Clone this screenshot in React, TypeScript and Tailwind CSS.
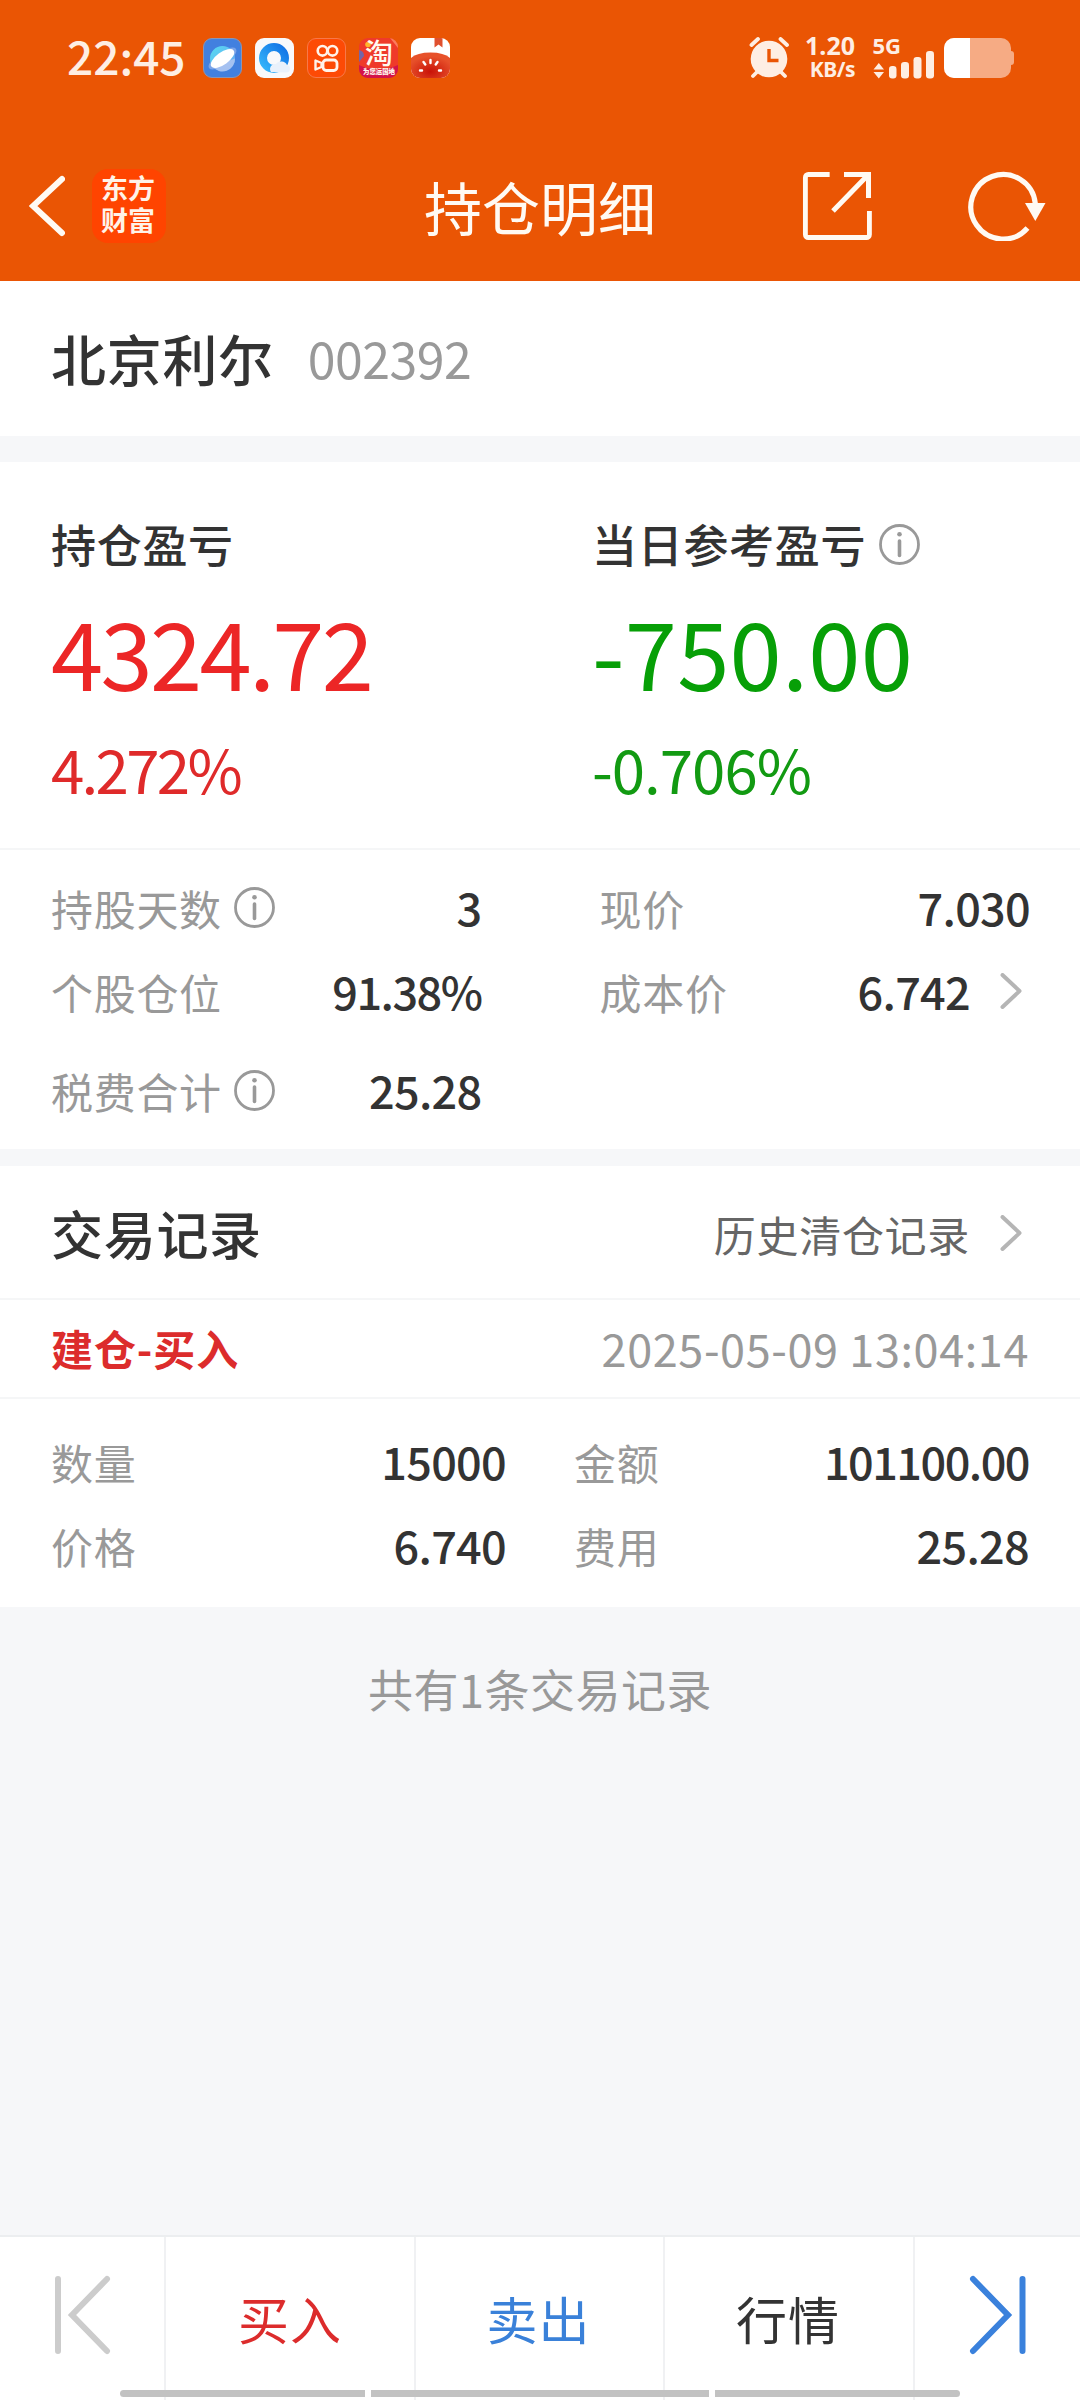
import type { ReactNode } from "react";
import clsx from "clsx";

interface FieldProps {
  label: string;
  value: string;
  info?: boolean;
  arrow?: boolean;
  tight?: boolean;
}

interface ProfitProps {
  title: ReactNode;
  amount: string;
  percent: string;
  amountClass: string;
  percentClass: string;
}

function InfoIcon() {
  return (
    <svg width="41" height="41" viewBox="0 0 41 41" fill="none" className="shrink-0">
      <circle cx="20.5" cy="20.5" r="19" stroke="#999" strokeWidth="2.8" />
      <circle cx="20.5" cy="10.3" r="2.3" fill="#999" />
      <path d="M20.5 17v14.5" stroke="#999" strokeWidth="3.6" strokeLinecap="round" />
    </svg>
  );
}

function ChevronIcon() {
  return (
    <svg width="22" height="36" viewBox="0 0 22 36" fill="none" className="shrink-0">
      <path d="M2.5 2l17 16-17 16" stroke="#b5b5b5" strokeWidth="4" strokeLinecap="round" strokeLinejoin="round" />
    </svg>
  );
}

function AppIcons() {
  return (
    <div className="flex gap-[13px]">
      {/* Planet browser */}
      <svg width="39" height="40" viewBox="0 0 39 40">
        <defs>
          <linearGradient id="planet" x1="0" y1="0" x2="1" y2="1">
            <stop offset="0" stopColor="#56dcf0" />
            <stop offset="1" stopColor="#6aa2f5" />
          </linearGradient>
        </defs>
        <rect x=".5" y=".5" width="38" height="39" rx="8.5" fill="#4280df" stroke="#8b95b4" />
        <ellipse cx="19.5" cy="20.5" rx="16.5" ry="6.5" transform="rotate(-36 19.5 20.5)" fill="#7ba4e8" />
        <circle cx="19.5" cy="20.5" r="12.5" fill="url(#planet)" />
        <path d="M9.5 28.5A12.5 12.5 0 0 0 32 20.5z" fill="#a5c1f1" />
        <ellipse cx="19.5" cy="20.5" rx="13.8" ry="6.3" transform="rotate(-36 19.5 20.5)" fill="#fff" />
      </svg>
      {/* Blue Q with cloud */}
      <svg width="39" height="40" viewBox="0 0 39 40">
        <defs>
          <linearGradient id="ring" x1="0" y1="1" x2="1" y2="0">
            <stop offset="0" stopColor="#35b5fa" />
            <stop offset="1" stopColor="#1173e6" />
          </linearGradient>
        </defs>
        <rect width="39" height="40" rx="9" fill="#f8f9fb" />
        <circle cx="19" cy="20" r="11" fill="none" stroke="url(#ring)" strokeWidth="8" />
        <path d="M16 34a5 5 0 0 1 1-7 6 6 0 0 1 4-1 6.5 6.5 0 0 1 11 1 3.8 3.8 0 0 1-1 7.500z" fill="#e9f1fb" />
      </svg>
      {/* Video camera */}
      <svg width="39" height="40" viewBox="0 0 39 40" fill="none">
        <rect x=".5" y=".5" width="38" height="39" rx="8.5" fill="#fd4a05" stroke="#f8784a" />
        <circle cx="15.5" cy="12.8" r="4.8" stroke="#fff3ea" strokeWidth="2.6" />
        <circle cx="25.5" cy="12.8" r="4.8" stroke="#fff3ea" strokeWidth="2.6" />
        <rect x="16" y="22" width="14" height="10.5" rx="3.2" stroke="#fff3ea" strokeWidth="2.8" />
        <path d="M8.500 22.500v9l6-2.500v-4z" stroke="#fff3ea" strokeWidth="2.4" strokeLinejoin="round" />
      </svg>
      {/* Shopping */}
      <div className="relative h-10 w-[39px] rounded-[9px] bg-[#ef3a2a] text-[#fffaf0]">
        <svg width="39" height="40" viewBox="0 0 39 40" className="absolute inset-0 rounded-[9px]">
          <path d="M0 12a6 6 0 0 1 5 6l-5 6z" fill="#7564a8" />
          <path d="M31 0h8v10z" fill="#fb7d5a" />
          <path d="M0 27q19 9 39 0v13H0z" fill="#d3134a" />
          <circle cx="9" cy="6.5" r="2.8" fill="#ffb52c" />
        </svg>
        <span className="absolute left-[6px] top-px text-[28px] leading-[27px] font-medium">淘</span>
        <span className="absolute left-[4px] top-[29px] text-[6.4px] leading-[9px] font-black whitespace-nowrap">为您运国地</span>
      </div>
      {/* Tomato reader */}
      <svg width="39" height="40" viewBox="0 0 39 40">
        <defs>
          <clipPath id="tomatoClip">
            <rect width="39" height="40" rx="9" />
          </clipPath>
          <radialGradient id="tomato" cx=".5" cy=".75" r=".6">
            <stop offset="0" stopColor="#c91208" />
            <stop offset="1" stopColor="#e7512a" />
          </radialGradient>
        </defs>
        <g clipPath="url(#tomatoClip)">
          <rect width="39" height="40" fill="#fff" />
          <path d="M23.500 0h8v9.500l-4-3-4 3z" fill="#e0502e" />
          <path d="M0 20q6-5.500 19.500-5.500T39 20v20H0z" fill="url(#tomato)" />
          <path d="M19.500 22v3M12.500 24l1.800 2.500M26.500 24l-1.800 2.500M9 32.500h2M28 32.500h2" stroke="#fff" strokeWidth="2.4" strokeLinecap="round" />
        </g>
      </svg>
    </div>
  );
}

function StatusBar() {
  return (
    <div className="flex h-[116px] items-center pl-[67px] pr-[66px] text-[#feeee3]">
      <span className="w-[136px] text-[46px] leading-[60px] font-medium -mt-[6px]">22:45</span>
      <AppIcons />
      <svg width="42" height="42" viewBox="0 0 42 42" fill="none" className="ml-auto" stroke="#feeee3">
        <circle cx="20" cy="22" r="18.3" fill="#feeee3" stroke="none" />
        <path d="M2.500 8l6.500-6M31.500 2L38 8M4 39l5-5M36 39l-5-5" strokeWidth="3.8" strokeLinecap="round" />
        <path d="M20 12v11.500h9.500" stroke="#ea5504" strokeWidth="3.4" />
      </svg>
      <div className="ml-[14px] flex w-[50px] flex-col items-end pb-[2px] font-['Noto_Sans'] font-bold">
        <span className="text-[25px] leading-[24px]">1.20</span>
        <span className="text-[21px] leading-[24px] tracking-[-0.5px]">KB/s</span>
      </div>
      <svg width="62" height="42" viewBox="0 0 62 42" className="ml-[18px] overflow-visible" fill="#feeee3">
        <text x="-.5" y="17" fontSize="22" fontWeight="700" className="font-['Noto_Sans']">5G</text>
        <path d="M.5 32.500L5.800 26l5.200 6.500zM.5 35h10.500L5.800 41.500z" />
        <rect x="16" y="29" width="7.5" height="12.5" rx="3.2" />
        <rect x="28" y="25" width="8" height="16.5" rx="3.2" />
        <rect x="40.5" y="20" width="8" height="21.5" rx="3.2" />
        <rect x="53" y="14" width="8" height="27.5" rx="3.2" />
      </svg>
      <div className="ml-[9px] flex items-center">
        <div className="h-10 w-[67px] overflow-hidden rounded-[10px] bg-[#f6ab84]">
          <div className="h-full w-[26px] bg-white" />
        </div>
        <div className="h-[14px] w-[3px] rounded-r-sm bg-[#f6ab84]" />
      </div>
    </div>
  );
}

function Header() {
  return (
    <header className="h-[281px] bg-[#ea5504]">
      <StatusBar />
      <div className="grid h-[180px] grid-cols-3 pl-[29px] pr-[33px]">
        <div className="flex items-center">
          <svg width="36" height="62" viewBox="0 0 36 62" fill="none">
            <path d="M33 4L4 31l29 27" stroke="#fffaf3" strokeWidth="6" strokeLinecap="round" />
          </svg>
          <div className="ml-[27px] flex h-[74px] w-[74px] flex-col items-center justify-center rounded-2xl bg-[#ff4400] pb-[5px] pr-[2px] text-[27px] leading-[32px] font-bold text-[#fff3e8]">
            <span>东方</span>
            <span>财富</span>
          </div>
        </div>
        <h1 className="self-center pl-[4px] text-center text-[58px] leading-[70px] text-[#fffaf3]">持仓明细</h1>
        <div className="flex items-center justify-end">
          <svg width="70" height="70" viewBox="0 0 70 70" fill="none" stroke="#fffaf3" strokeWidth="5" className="mr-[96px]">
            <path d="M28.500 3.500H6.500a3 3 0 0 0-3 3v57a3 3 0 0 0 3 3h60a3 3 0 0 0 3-3V40" transform="scale(.97 1)" />
            <path d="M42 3.500h24.500V27M66 4L31 40" />
          </svg>
          <svg width="79" height="70" viewBox="0 0 79 70" fill="none">
            <path d="M67.300 32.500A32.300 32.300 0 1 0 59.500 57" stroke="#fffaf3" strokeWidth="5.2" />
            <path d="M57 32h20.500L67.300 50z" fill="#fffaf3" />
          </svg>
        </div>
      </div>
    </header>
  );
}

function Profit({ title, amount, percent, amountClass, percentClass }: ProfitProps) {
  return (
    <div className="w-[541px] shrink-0">
      <div className="flex h-[62px] items-center gap-[13px] text-[45px] font-medium tracking-[0.7px]">{title}</div>
      <div className={clsx("mt-[25px] text-[94px] leading-[100px]", amountClass)}>{amount}</div>
      <div className={clsx("mt-[38px] text-[60px] leading-[60px]", percentClass)}>{percent}</div>
    </div>
  );
}

function Field({ label, value, info, arrow, tight }: FieldProps) {
  return (
    <div className="flex h-[84px] items-center">
      <span className="text-[42px] tracking-[0.7px] text-[#999]">{label}</span>
      {info && <span className="ml-[12px]"><InfoIcon /></span>}
      <span className={clsx("ml-auto text-[45px] font-medium", tight ? "tracking-[-1.5px]" : "tracking-[-0.7px]")}>
        {value}
      </span>
      {arrow && <span className="ml-[30px] mr-[8px]"><ChevronIcon /></span>}
    </div>
  );
}

function BottomBar() {
  return (
    <nav className="relative border-t-2 border-[#eceef0] bg-white text-[51px] tracking-[1px]">
      <div className="grid h-[163px] grid-cols-[166px_250px_249px_250px_165px] divide-x-2 divide-[#f0f1f3]">
        <div className="pl-[54px] pt-[38px]">
          <svg width="58" height="80" viewBox="0 0 58 80" fill="none" stroke="#ccc" strokeWidth="6" strokeLinecap="round">
            <path d="M4 4v72M53 4L18 40l35 36" />
          </svg>
        </div>
        <div className="flex items-center justify-center text-[#dc2c2c]">买入</div>
        <div className="flex items-center justify-center pr-[2px] text-[#3a81d9]">卖出</div>
        <div className="flex items-center justify-center pr-[2px]">行情</div>
        <div className="pl-[54px] pt-[38px]">
          <svg width="60" height="80" viewBox="0 0 60 80" fill="none" stroke="#3a81dc" strokeWidth="6" strokeLinecap="round">
            <path d="M4 4l35 36L4 76M53.500 4v72" />
          </svg>
        </div>
      </div>
      {/* Gesture navigation hints */}
      <div className="absolute bottom-[3px] left-[120px] flex h-[7px] gap-[6px]">
        <i className="w-[245px] rounded-l-full bg-[#c2c2c2]" />
        <i className="w-[338px] bg-[#c2c2c2]" />
        <i className="w-[245px] rounded-r-full bg-[#c2c2c2]" />
      </div>
    </nav>
  );
}

export default function App() {
  return (
    <div className="flex h-[2400px] w-[1080px] flex-col bg-[#f6f7f9] font-['Noto_Sans_CJK_SC',sans-serif] text-[#333]">
      <Header />

      <section className="flex h-[155px] items-center bg-white pb-[2px] pl-[51px]">
        <h2 className="text-[55px] font-medium tracking-[0.7px]">北京利尔</h2>
        <span className="ml-[34px] text-[50px] tracking-[-0.5px] text-[#999]">002392</span>
      </section>

      <section className="mt-[26px] bg-white">
        <div className="flex h-[386px] pl-[51px] pt-[51px]">
          <Profit
            title="持仓盈亏"
            amount="4324.72"
            percent="4.272%"
            amountClass="text-[#ec2626] tracking-[-2.7px]"
            percentClass="text-[#df2a2a] tracking-[-2.7px]"
          />
          <Profit
            title={<><span>当日参考盈亏</span><InfoIcon /></>}
            amount="-750.00"
            percent="-0.706%"
            amountClass="text-[#079f07] tracking-[0.2px]"
            percentClass="text-[#129a12] tracking-[-1px]"
          />
        </div>
        <div className="grid h-[301px] grid-cols-2 gap-x-[118px] border-t-2 border-[#f5f6f7] pl-[51px] pr-[50px] pt-[15px]">
          <div>
            <Field label="持股天数" value="3" info />
            <Field label="个股仓位" value="91.38%" tight />
            <div className="pt-[15px]">
              <Field label="税费合计" value="25.28" info />
            </div>
          </div>
          <div>
            <Field label="现价" value="7.030" />
            <Field label="成本价" value="6.742" arrow />
          </div>
        </div>
      </section>

      <section className="mt-[17px] bg-white">
        <div className="flex h-[132px] items-center pt-[2px] pl-[51px] pr-[58px]">
          <h3 className="text-[52px] font-medium tracking-[0.7px]">交易记录</h3>
          <span className="ml-auto mr-[30px] text-[42px] tracking-[0.7px] text-[#666]">历史清仓记录</span>
          <ChevronIcon />
        </div>
        <div className="flex h-[101px] items-center justify-between border-y-2 border-[#f5f6f7] px-[51px] pb-[2px]">
          <span className="text-[42px] font-bold tracking-[0.9px] text-[#dc2c2c]">建仓-买入</span>
          <span className="text-[45px] tracking-[0.6px] text-[#999]">2025-05-09 13:04:14</span>
        </div>
        <div className="grid h-[208px] grid-cols-[455px_455px] content-start gap-x-[68px] pl-[51px] pt-[20px]">
          <Field label="数量" value="15000" />
          <Field label="金额" value="101100.00" tight />
          <Field label="价格" value="6.740" />
          <Field label="费用" value="25.28" />
        </div>
      </section>

      <p className="mt-[52px] text-center text-[45px] leading-[60px] tracking-[0.5px] text-[#999]">共有1条交易记录</p>

      <div className="mt-auto">
        <BottomBar />
      </div>
    </div>
  );
}
